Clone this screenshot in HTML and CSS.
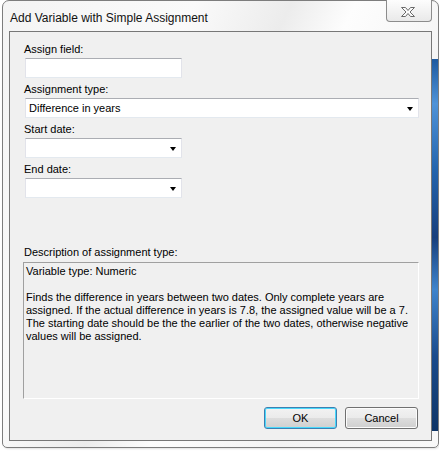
FILE: index.html
```html
<!DOCTYPE html>
<html>
<head>
<meta charset="utf-8">
<link rel="stylesheet" href="styles.css">
</head>
<body>
<div class="window">
  <div class="titlebar">
    <span class="title">Add Variable with Simple Assignment</span>
    <div class="close">
      <svg width="16" height="12" viewBox="0 0 16 12"><path d="M1.5 1.5h4l2.5 3 2.5-3h4l-4.5 4.5 4.5 4.5h-4l-2.5-3-2.5 3h-4l4.5-4.5z" fill="#fbfbfb" stroke="#6a6a6a" stroke-width="1"/></svg>
    </div>
  </div>
  <div class="client">
    <div class="form">
      <div class="label">Assign field:</div>
      <div class="textbox small"></div>
      <div class="label gap">Assignment type:</div>
      <div class="combo"><span class="combo-text">Difference in years</span><span class="arrow"></span></div>
      <div class="label gap">Start date:</div>
      <div class="combo small"><span class="combo-text"></span><span class="arrow"></span></div>
      <div class="label gap">End date:</div>
      <div class="combo small"><span class="combo-text"></span><span class="arrow"></span></div>
      <div class="label desc-label">Description of assignment type:</div>
      <div class="desc">Variable type: Numeric<br><br>Finds the difference in years between two dates. Only complete years are<br>assigned. If the actual difference in years is 7.8, the assigned value will be a 7.<br>The starting date should be the the earlier of the two dates, otherwise negative<br>values will be assigned.</div>
      <div class="buttons">
        <div class="btn default">OK</div>
        <div class="btn">Cancel</div>
      </div>
    </div>
  </div>
</div>
</body>
</html>
```
FILE: styles.css
```css
html, body {
  margin: 0;
  padding: 0;
  background: #ffffff;
}
body {
  width: 439px;
  height: 452px;
  overflow: hidden;
  font-family: "Liberation Sans", Arial, sans-serif;
  font-size: 11px;
  color: #000;
}
.window {
  box-sizing: border-box;
  margin-left: 2px;
  width: 437px;
  height: 448px;
  border: 1px solid #7d7d7d;
  border-radius: 7px 7px 5px 5px;
  padding: 0 6px 6px 6px;
  display: flex;
  flex-direction: column;
  background:
    linear-gradient(180deg, #1e5aa0 0%, #4f93d8 12%, #2364ad 30%, #173f7d 48%, #3f84cc 62%, #1a4b8c 80%, #0f3566 100%) no-repeat right 0 top 58px / 6px 372px,
    linear-gradient(115deg, #f4f4f4 0%, #fafafa 30%, #ececec 45%, #fdfdfd 55%, #f3f3f3 75%, #f8f8f8 100%);
  box-shadow: 1px 1px 2px rgba(0,0,0,0.12);
}
.titlebar {
  height: 30px;
  flex: none;
  display: flex;
  align-items: flex-start;
}
.title {
  font-family: "Liberation Sans", Arial, sans-serif;
  font-size: 12px;
  line-height: 14px;
  margin-top: 10px;
  margin-left: 1px;
  color: #111;
}
.close {
  margin-left: auto;
  margin-right: 0;
  margin-top: -1px;
  width: 46px;
  height: 22px;
  box-sizing: border-box;
  border: 1px solid #8c8c8c;
  border-top: none;
  border-radius: 0 0 4px 4px;
  background: linear-gradient(180deg, #fdfdfd 0%, #f1f1f1 60%, #e9e9e9 100%);
  display: flex;
  justify-content: center;
  align-items: center;
  padding-top: 3px;
  padding-right: 3px;
}
.close svg { display: block; }
.client {
  flex: 1;
  border: 1px solid #777;
  background: #f0f0f0;
}
.form {
  padding: 11px 12px 0 14px;
  display: flex;
  flex-direction: column;
}
.label {
  line-height: 13px;
  height: 13px;
  white-space: nowrap;
}
.label.gap { margin-top: 5px; }
.label.desc-label { margin-top: 48px; }
.textbox, .combo {
  box-sizing: border-box;
  height: 20px;
  margin-top: 2px;
  margin-left: 1px;
  background: #fff;
  border: 1px solid #e2e3ea;
  border-top-color: #abadb3;
  border-bottom-color: #e3e9ef;
}
.small { width: 157px; }
.combo {
  display: flex;
  align-items: center;
  padding: 0 5px 0 3px;
}
.combo-text {
  flex: 1;
  line-height: 13px;
}
.arrow {
  width: 0;
  height: 0;
  border-left: 3.5px solid transparent;
  border-right: 3.5px solid transparent;
  border-top: 4px solid #000;
  margin-top: 1px;
}
.desc {
  box-sizing: border-box;
  margin-top: 3px;
  margin-left: -1px;
  height: 137px;
  border: 1px solid;
  border-color: #a0a0a0 #ffffff #ffffff #a0a0a0;
  padding: 2px 0 0 2px;
  line-height: 13px;
  white-space: nowrap;
  background: #f0f0f0;
}
.buttons {
  margin-top: 8px;
  margin-right: 1px;
  display: flex;
  justify-content: flex-end;
  gap: 8px;
}
.btn {
  box-sizing: border-box;
  width: 73px;
  height: 22px;
  border: 1px solid #707070;
  border-radius: 3px;
  background: linear-gradient(180deg, #f2f2f2 0%, #ebebeb 48%, #dddddd 52%, #cfcfcf 100%);
  box-shadow: inset 0 0 0 1px #fcfcfc;
  display: flex;
  justify-content: center;
  align-items: center;
  line-height: 13px;
}
.btn.default {
  border-color: #3c7fb1;
  box-shadow: inset 0 0 0 1px #48d8fb;
}
```
